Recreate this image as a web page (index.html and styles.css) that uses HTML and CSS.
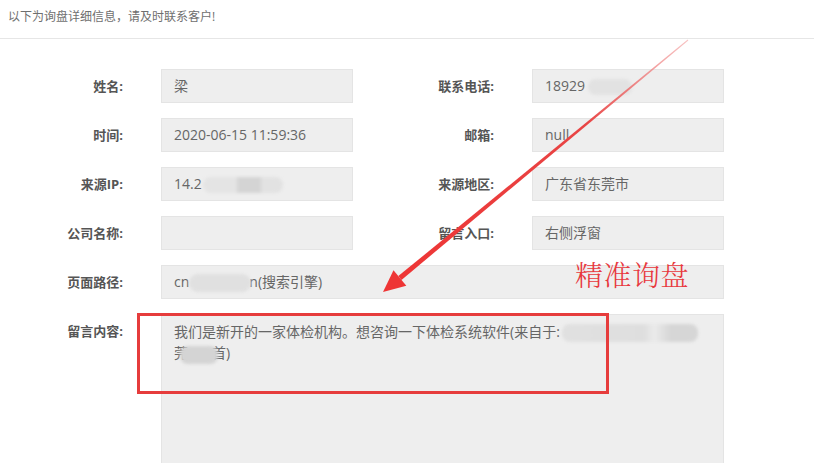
FILE: index.html
```html
<!DOCTYPE html>
<html lang="zh-CN">
<head>
<meta charset="utf-8">
<title>询盘详细信息</title>
<link rel="stylesheet" href="styles.css">
</head>
<body>
<div class="page">
  <div class="header">以下为询盘详细信息，请及时联系客户!</div>
  <div class="form">
    <div class="lbl">姓名:</div>
    <div class="field">梁</div>
    <div class="lbl">联系电话:</div>
    <div class="field">18929<span class="blob b-phone"></span></div>

    <div class="lbl">时间:</div>
    <div class="field">2020-06-15 11:59:36</div>
    <div class="lbl">邮箱:</div>
    <div class="field">null</div>

    <div class="lbl">来源IP:</div>
    <div class="field">14.2<span class="blob b-ip"></span></div>
    <div class="lbl">来源地区:</div>
    <div class="field">广东省东莞市</div>

    <div class="lbl">公司名称:</div>
    <div class="field"></div>
    <div class="lbl">留言入口:</div>
    <div class="field">右侧浮窗</div>

    <div class="lbl">页面路径:</div>
    <div class="field wide">cn<span class="blob b-path"></span>n(搜索引擎)</div>

    <div class="lbl lbl-top">留言内容:</div>
    <div class="field wide area">我们是新开的一家体检机构。想咨询一下体检系统软件(来自于:<span class="blob b-src"></span><br>莞<span class="blob b-src2"></span>首)</div>
  </div>

  <div class="note-box"></div>
  <div class="note-text">精准询盘</div>
  <svg class="arrow" width="814" height="463" viewBox="0 0 814 463">
    <defs>
      <linearGradient id="shaft" x1="688" y1="40" x2="400" y2="280" gradientUnits="userSpaceOnUse">
        <stop offset="0" stop-color="#f29a9a" stop-opacity="0.6"/>
        <stop offset="0.35" stop-color="#e84545"/>
        <stop offset="1" stop-color="#ee3535"/>
      </linearGradient>
    </defs>
    <polygon points="688.3,40.4 687.7,39.6 398.3,276.1 401.5,279.9" fill="url(#shaft)"/>
    <polygon points="383,292 393.5,270.3 406.3,285.7" fill="#ee3535"/>
  </svg>
</div>
</body>
</html>
```
FILE: styles.css
```css
html, body {
  margin: 0;
  padding: 0;
  height: 463px;
  overflow: hidden;
  background: #fff;
}

.page {
  position: relative;
  width: 814px;
  height: 463px;
  font-family: "Open Sans", "Noto Sans CJK SC", sans-serif;
}

.header {
  box-sizing: border-box;
  height: 39px;
  padding: 8px 8px 0;
  font-size: 12px;
  line-height: 18px;
  color: #6f6f6f;
  border-bottom: 1px solid #e6e6e6;
}

.form {
  margin-top: 30px;
  display: grid;
  grid-template-columns: 161px 192px 179px 192px;
  grid-auto-rows: 34px;
  row-gap: 15px;
}

.lbl {
  box-sizing: border-box;
  padding-right: 38px;
  text-align: right;
  font-size: 13px;
  font-weight: bold;
  color: #555;
  line-height: 34px;
  white-space: nowrap;
}

.lbl-top {
  line-height: 34px;
}

.field {
  box-sizing: border-box;
  height: 34px;
  border: 1px solid #e4e4e4;
  background: #eeeeee;
  padding: 0 12px;
  font-size: 14px;
  line-height: 32px;
  color: #666;
  white-space: nowrap;
  overflow: hidden;
}

.wide {
  grid-column: 2 / 5;
}

.area {
  height: 160px;
  line-height: 21px;
  padding-top: 6px;
  white-space: normal;
}

.blob {
  display: inline-block;
  height: 16px;
  vertical-align: middle;
  border-radius: 8px;
  background: #dcdcdc;
  filter: blur(1.5px);
}

.b-phone {
  width: 44px;
  margin-left: 3px;
  background: #e2e2e2;
}

.b-ip {
  width: 80px;
  margin-left: 1px;
  background: linear-gradient(90deg, #e4e4e4 0%, #e4e4e4 40%, #d4d4d4 45%, #d4d4d4 70%, #e2e2e2 75%, #e2e2e2 100%);
}

.b-path {
  width: 62px;
  margin-left: 0;
  margin-right: -2px;
  height: 18px;
  border-radius: 10px;
  background: #e0e0e0;
}

.b-src {
  width: 136px;
  margin-left: 2px;
  height: 18px;
  background: linear-gradient(90deg, #e0e0e0 0%, #dedede 60%, #eaeaea 68%, #d6d6d6 80%, #d6d6d6 100%);
}

.b-src2 {
  width: 38px;
  margin-left: -8px;
  margin-right: -6px;
  height: 18px;
  background: #d4d4d4;
}

.note-box {
  position: absolute;
  left: 137px;
  top: 313px;
  width: 466px;
  height: 75px;
  border: 3px solid #e63c3c;
}

.note-text {
  position: absolute;
  left: 575px;
  top: 254px;
  font-family: "Noto Serif CJK SC", "Noto Sans CJK SC", serif;
  font-weight: 300;
  font-size: 28px;
  line-height: 40px;
  color: #e8383d;
  letter-spacing: 0.5px;
}

.arrow {
  position: absolute;
  left: 0;
  top: 0;
  pointer-events: none;
}
```
